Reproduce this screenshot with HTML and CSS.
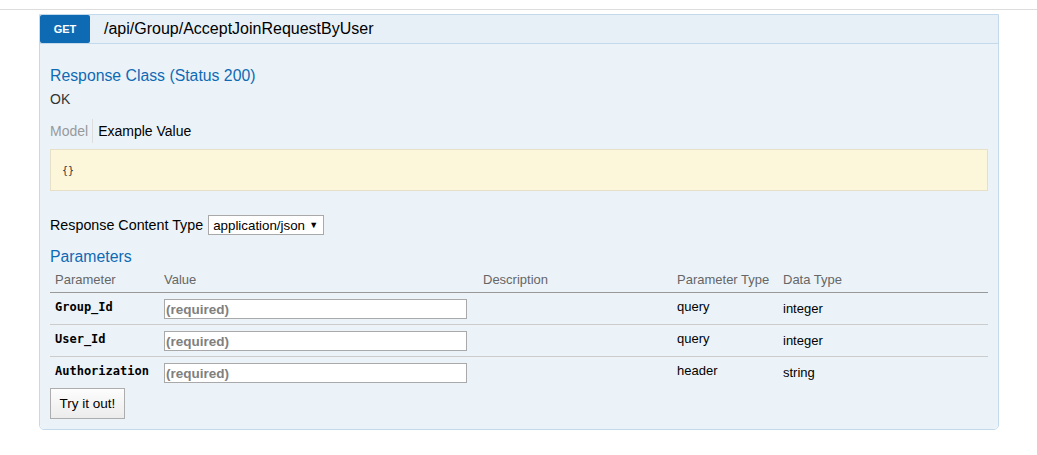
FILE: index.html
```html
<!DOCTYPE html>
<html>
<head>
<meta charset="utf-8">
<link rel="stylesheet" href="styles.css">
</head>
<body>
<div class="topbar"></div>
<div class="op">
  <div class="heading">
    <span class="method">GET</span>
    <span class="path">/api/Group/AcceptJoinRequestByUser</span>
  </div>
  <div class="content">
    <h4 class="title">Response Class (Status 200)</h4>
    <div class="ok">OK</div>
    <div class="tabs">
      <span class="tab tab-model">Model</span>
      <span class="tab tab-example">Example Value</span>
    </div>
    <div class="sample"><pre>{}</pre></div>
    <div class="ctype">
      <span>Response Content Type</span>
      <span class="select"><span>application/json</span><span class="arrow">▼</span></span>
    </div>
    <h4 class="title params-title">Parameters</h4>
    <table class="params">
      <thead>
        <tr>
          <th class="c1">Parameter</th>
          <th class="c2">Value</th>
          <th class="c3">Description</th>
          <th class="c4">Parameter Type</th>
          <th class="c5">Data Type</th>
        </tr>
      </thead>
      <tbody>
        <tr>
          <td class="code">Group_Id</td>
          <td><input class="field" type="text" placeholder="(required)"></td>
          <td></td>
          <td class="ptype">query</td>
          <td class="dtype">integer</td>
        </tr>
        <tr>
          <td class="code">User_Id</td>
          <td><input class="field" type="text" placeholder="(required)"></td>
          <td></td>
          <td class="ptype">query</td>
          <td class="dtype">integer</td>
        </tr>
        <tr>
          <td class="code">Authorization</td>
          <td><input class="field" type="text" placeholder="(required)"></td>
          <td></td>
          <td class="ptype">header</td>
          <td class="dtype">string</td>
        </tr>
      </tbody>
    </table>
    <button class="try">Try it out!</button>
  </div>
</div>
</body>
</html>
```
FILE: styles.css
```css
html, body {
  margin: 0;
  padding: 0;
  background: #fff;
  font-family: "Liberation Sans", Arial, sans-serif;
  color: #333;
}
.topbar {
  height: 9px;
  border-bottom: 1px solid #ddd;
}
.op {
  margin: 4px 0 0 39px;
  width: 960px;
  box-sizing: border-box;
  border: 1px solid #c3d9ec;
  border-radius: 0 0 5px 5px;
  overflow: hidden;
}
.heading {
  display: flex;
  align-items: center;
  height: 28px;
  background: #e7f0f7;
  border-bottom: 1px solid #c3d9ec;
}
.method {
  width: 50px;
  height: 28px;
  line-height: 28px;
  text-align: center;
  background: #0f6ab4;
  color: #fff;
  font-size: 11px;
  font-weight: bold;
  border-radius: 2px;
}
.path {
  margin-left: 14px;
  font-size: 16px;
  color: #000;
  line-height: 28px;
}
.content {
  background: #ebf3f9;
  padding: 22px 10px 10px 10px;
}
.title {
  margin: 0;
  font-size: 15.8px;
  font-weight: normal;
  line-height: 20px;
  color: #0f6ab4;
}
.ok {
  margin-top: 4px;
  font-size: 14px;
  line-height: 18px;
  color: #333;
}
.tabs {
  display: flex;
  margin-top: 11px;
  height: 24px;
  font-size: 14px;
  line-height: 24px;
}
.tab-model {
  color: #999;
  padding-right: 4px;
  border-right: 1px solid #ddd;
}
.tab-example {
  color: #000;
  padding-left: 5px;
}
.sample {
  margin-top: 6px;
  height: 42px;
  box-sizing: border-box;
  background: #fcf6db;
  border: 1px solid #e5e0c6;
  display: flex;
  align-items: center;
  padding: 0 0 0 11px;
}
.sample pre {
  margin: 0;
  font-family: "DejaVu Sans Mono", monospace;
  font-size: 10px;
  color: #333;
}
.ctype {
  margin-top: 24px;
  display: flex;
  align-items: center;
  height: 20px;
  font-size: 14.3px;
  color: #000;
}
.select {
  margin-left: 5px;
  display: flex;
  align-items: center;
  justify-content: space-between;
  width: 116px;
  height: 20px;
  box-sizing: border-box;
  padding: 0 5px 0 4px;
  background: #fff;
  border: 1px solid #a9a9a9;
  font-size: 13.33px;
}
.arrow {
  font-size: 9px;
}
.params-title {
  margin-top: 12px;
}
.params {
  margin-top: 1px;
  width: 938px;
  border-collapse: collapse;
  table-layout: fixed;
  font-size: 13px;
}
.params th {
  text-align: left;
  font-weight: normal;
  color: #666;
  padding: 4px 5px;
  line-height: 16px;
  border-bottom: 1px solid #999;
}
.c1 { width: 99px; }
.c2 { width: 309px; }
.c3 { width: 184px; }
.c4 { width: 96px; }
.params td {
  padding: 6px 5px 5px 5px;
  vertical-align: top;
  line-height: 16px;
  color: #000;
  border-bottom: 1px solid #ccc;
}
.params tbody tr:last-child td {
  border-bottom: none;
}
.params td.code {
  font-family: "DejaVu Sans Mono", monospace;
  font-weight: bold;
  font-size: 12px;
}
.params td.ptype {
  padding-top: 6px;
}
.params td.dtype {
  padding-top: 8px;
}
.field {
  display: block;
  width: 303px;
  height: 20px;
  box-sizing: border-box;
  margin: 0;
  padding: 0 1px;
  border: 1px solid #a9a9a9;
  background: #fff;
  font-family: "Liberation Sans", Arial, sans-serif;
  font-size: 13.5px;
  font-weight: bold;
}
.field::placeholder {
  color: #808080;
  opacity: 1;
}
.try {
  display: block;
  width: 75px;
  height: 31px;
  margin: 0;
  padding: 0;
  border: 1px solid #adadad;
  border-radius: 0;
  background: linear-gradient(#fdfdfd, #ececec);
  font-family: "Liberation Sans", Arial, sans-serif;
  font-size: 13.5px;
  color: #000;
}
```
